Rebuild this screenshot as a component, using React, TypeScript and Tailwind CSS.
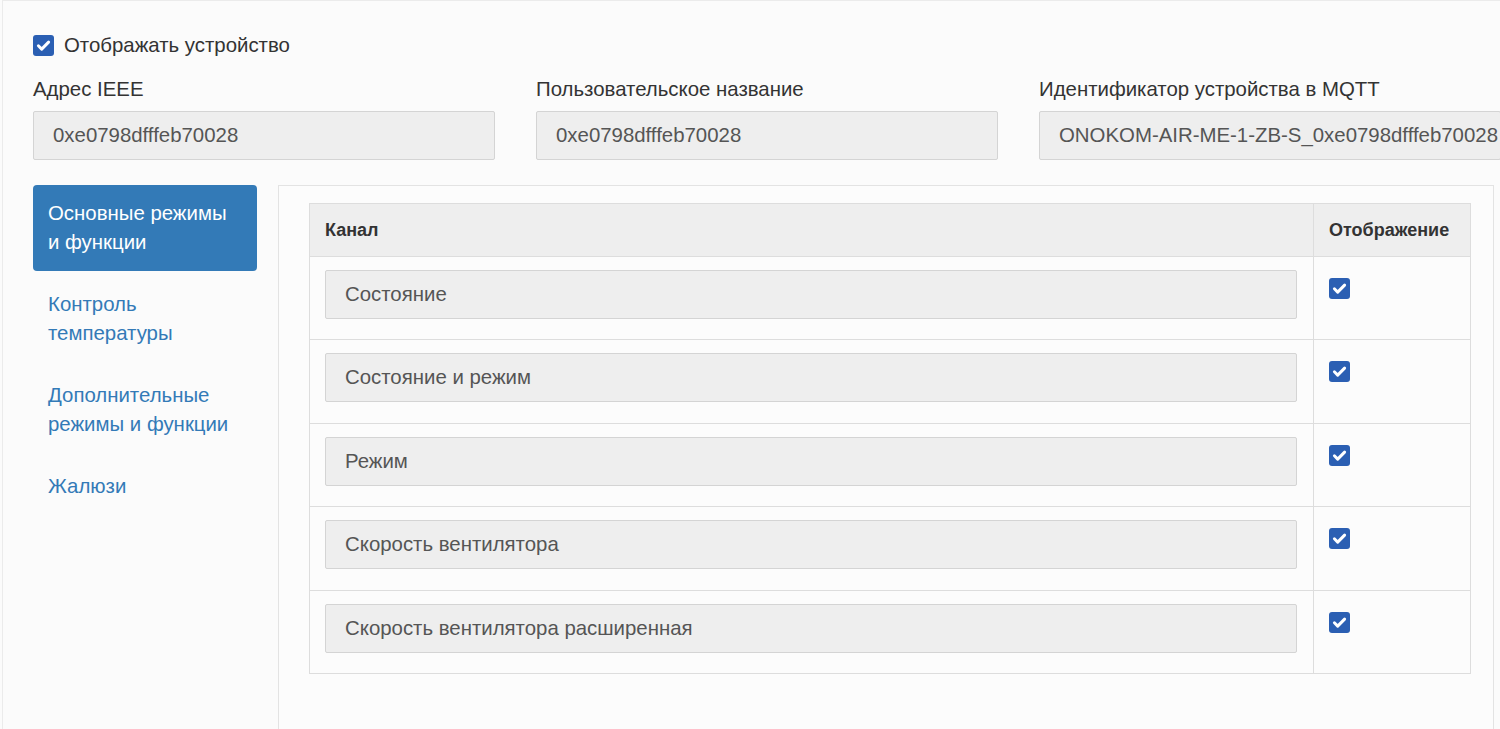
const channels = [
  'Состояние',
  'Состояние и режим',
  'Режим',
  'Скорость вентилятора',
  'Скорость вентилятора расширенная',
]

const tabs = [
  'Основные режимы и функции',
  'Контроль температуры',
  'Дополнительные режимы и функции',
  'Жалюзи',
]

function Box() {
  return (
    <span className="inline-flex items-center justify-center w-[21px] h-[21px] rounded-[3px] bg-[#2b5fb3] shrink-0">
      <svg width="17" height="17" viewBox="0 0 16 16" fill="none">
        <path d="M3.2 8.3l3.1 3.1 6.5-6.6" stroke="white" strokeWidth="2.8" strokeLinecap="round" strokeLinejoin="round" />
      </svg>
    </span>
  )
}

export default function App() {
  return (
    <div className="w-[1500px] h-[729px] overflow-hidden bg-[#fbfbfb] font-[family-name:'Liberation_Sans',Arial,sans-serif] text-[#333] text-[20.4px] leading-[29px]">
      <div className="ml-[2px] border-l border-t border-[#ebebeb] pl-[30px] pt-[30px] min-h-[800px] w-[1600px]">
        <label className="flex items-center gap-[10px] h-[29px]">
          <Box />
          <span>Отображать устройство</span>
        </label>

        <div className="grid grid-cols-[462px_462px_462px] gap-x-[41px] mt-[15px]">
          {[
            ['Адрес IEEE', '0xe0798dfffeb70028'],
            ['Пользовательское название', '0xe0798dfffeb70028'],
            ['Идентификатор устройства в MQTT', 'ONOKOM-AIR-ME-1-ZB-S_0xe0798dfffeb70028'],
          ].map(([label, value]) => (
            <div key={label}>
              <div className="h-[29px]">{label}</div>
              <div className="mt-[7px] h-[49px] flex items-center px-[19px] bg-[#eeeeee] border border-[#d4d4d4] rounded-[2px] text-[#555] whitespace-nowrap overflow-hidden">
                {value}
              </div>
            </div>
          ))}
        </div>

        <div className="flex mt-[25px]">
          <ul className="w-[224px] shrink-0">
            {tabs.map((t, i) => (
              <li
                key={t}
                className={
                  i === 0
                    ? 'pl-[15px] pr-[18px] py-[14px] rounded-[4px] bg-[#337ab7] text-white'
                    : 'pl-[15px] pr-[18px] py-[14px] mt-[5px] text-[#337ab7]'
                }
              >
                {t}
              </li>
            ))}
          </ul>

          <div className="ml-[21px] w-[1216px] border-l border-t border-r border-[#e3e3e3] pl-[30px] pr-[23px] pt-[17px] pb-[80px] bg-[#fcfcfc]">
            <table className="w-[1162px] border-collapse border border-[#dddddd]">
              <thead>
                <tr className="bg-[#eeeeee] text-[18px] font-bold">
                  <th className="h-[53px] text-left px-[15px] border border-[#dddddd] w-[1004px]">Канал</th>
                  <th className="h-[53px] text-left px-[15px] border border-[#dddddd]">Отображение</th>
                </tr>
              </thead>
              <tbody>
                {channels.map(c => (
                  <tr key={c}>
                    <td className="align-top pl-[15px] pr-[16px] pt-[13px] pb-[20.4px] border border-[#dddddd]">
                      <div className="h-[49px] flex items-center px-[19px] bg-[#eeeeee] border border-[#d4d4d4] rounded-[2px] text-[#555]">
                        {c}
                      </div>
                    </td>
                    <td className="align-top px-[15px] pt-[19px] border border-[#dddddd]">
                      <Box />
                    </td>
                  </tr>
                ))}
              </tbody>
            </table>
          </div>
        </div>
      </div>
    </div>
  )
}
